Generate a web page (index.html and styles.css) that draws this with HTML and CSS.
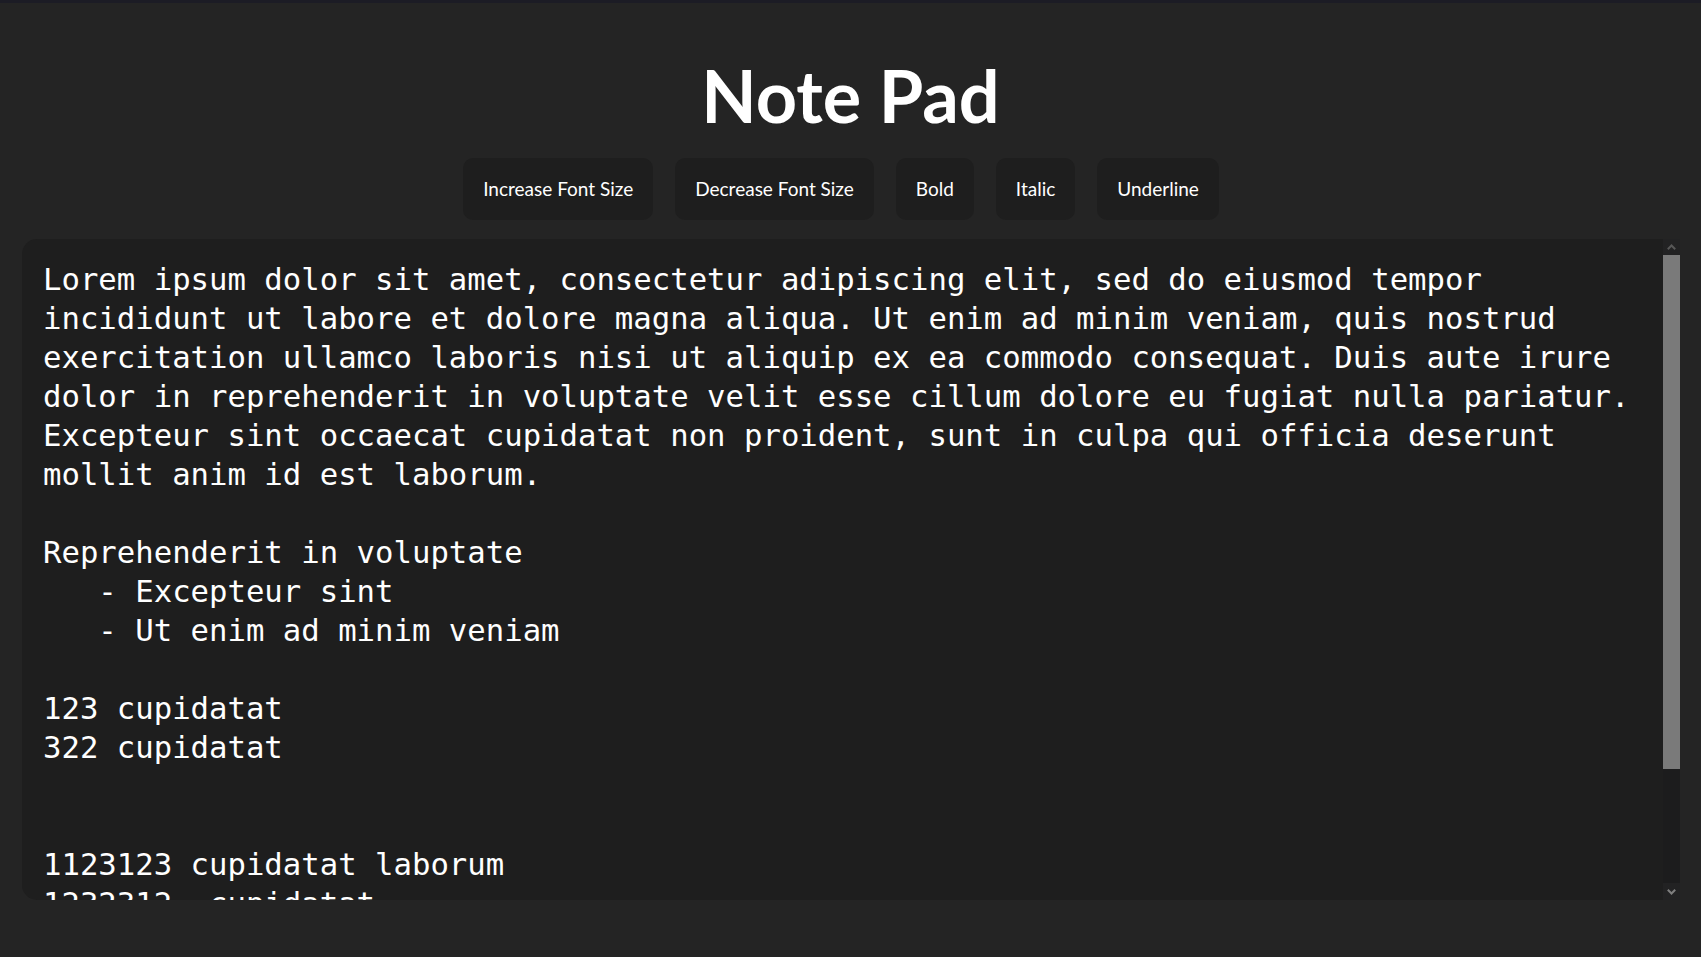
FILE: index.html
```html
<!DOCTYPE html>
<html lang="en">
<head>
<meta charset="utf-8">
<title>Note Pad</title>
<link rel="stylesheet" href="styles.css">
</head>
<body>
<div class="app">
  <h1 class="title">Note Pad</h1>
  <div class="toolbar">
    <button class="btn">Increase Font Size</button>
    <button class="btn">Decrease Font Size</button>
    <button class="btn">Bold</button>
    <button class="btn">Italic</button>
    <button class="btn">Underline</button>
  </div>
  <div class="editor-wrap">
    <textarea class="editor" spellcheck="false">Lorem ipsum dolor sit amet, consectetur adipiscing elit, sed do eiusmod tempor incididunt ut labore et dolore magna aliqua. Ut enim ad minim veniam, quis nostrud exercitation ullamco laboris nisi ut aliquip ex ea commodo consequat. Duis aute irure dolor in reprehenderit in voluptate velit esse cillum dolore eu fugiat nulla pariatur. Excepteur sint occaecat cupidatat non proident, sunt in culpa qui officia deserunt mollit anim id est laborum.

Reprehenderit in voluptate
   - Excepteur sint
   - Ut enim ad minim veniam

123 cupidatat
322 cupidatat


1123123 cupidatat laborum
1232312  cupidatat
2312312  cupidatat
3123123  laborum
</textarea>
    <div class="scrollbar" aria-hidden="true">
      <div class="sb-btn">
        <svg width="9" height="6" viewBox="0 0 9 6"><path d="M0.8 5.2 L4.5 1.5 L8.2 5.2" fill="none" stroke="#575757" stroke-width="2"/></svg>
      </div>
      <div class="sb-track">
        <div class="sb-thumb"></div>
      </div>
      <div class="sb-btn">
        <svg width="9" height="6" viewBox="0 0 9 6"><path d="M0.8 0.8 L4.5 4.5 L8.2 0.8" fill="none" stroke="#7e7e7e" stroke-width="2"/></svg>
      </div>
    </div>
  </div>
</div>
</body>
</html>
```

FILE: styles.css
```css
html, body {
  margin: 0;
  padding: 0;
  background: #242424;
}

body {
  border-top: 3px solid #1c1c25;
  height: 954px;
  overflow: hidden;
}

.app {
  display: flex;
  flex-direction: column;
  align-items: stretch;
}

.title {
  margin: 49px 0 0;
  text-align: center;
  font-family: Lato, "Noto Sans", sans-serif;
  font-weight: 700;
  font-size: 72px;
  line-height: 86px;
  color: #ffffff;
}

.toolbar {
  display: flex;
  justify-content: center;
  gap: 22px;
  margin-top: 20px;
  padding-right: 19px;
}

.btn {
  font-family: Lato, "Noto Sans", sans-serif;
  font-size: 19px;
  line-height: 24px;
  color: #ffffff;
  background: #1e1e1e;
  border: none;
  border-radius: 10px;
  padding: 19px 20px;
  cursor: pointer;
}

.editor-wrap {
  display: flex;
  margin: 19px 21px 0 22px;
  height: 661px;
}

.editor {
  flex: 1;
  display: block;
  box-sizing: border-box;
  min-width: 0;
  height: 100%;
  margin: 0;
  padding: 21px;
  border: none;
  border-radius: 15px 0 0 15px;
  background: #1e1e1e;
  color: #ffffff;
  font-family: "DejaVu Sans Mono", "Liberation Mono", monospace;
  font-size: 30.65px;
  line-height: 39px;
  resize: none;
  outline: none;
  overflow: hidden;
}

.scrollbar {
  width: 17px;
  display: flex;
  flex-direction: column;
  background: #1c1c1d;
}

.sb-btn {
  height: 16px;
  flex: none;
  display: flex;
  align-items: center;
  justify-content: center;
  background: #222223;
}

.sb-btn:last-child {
  height: 17px;
}

.sb-track {
  flex: 1;
  display: flex;
  flex-direction: column;
}

.sb-thumb {
  height: 514px;
  background: #7a7a7a;
}
```
